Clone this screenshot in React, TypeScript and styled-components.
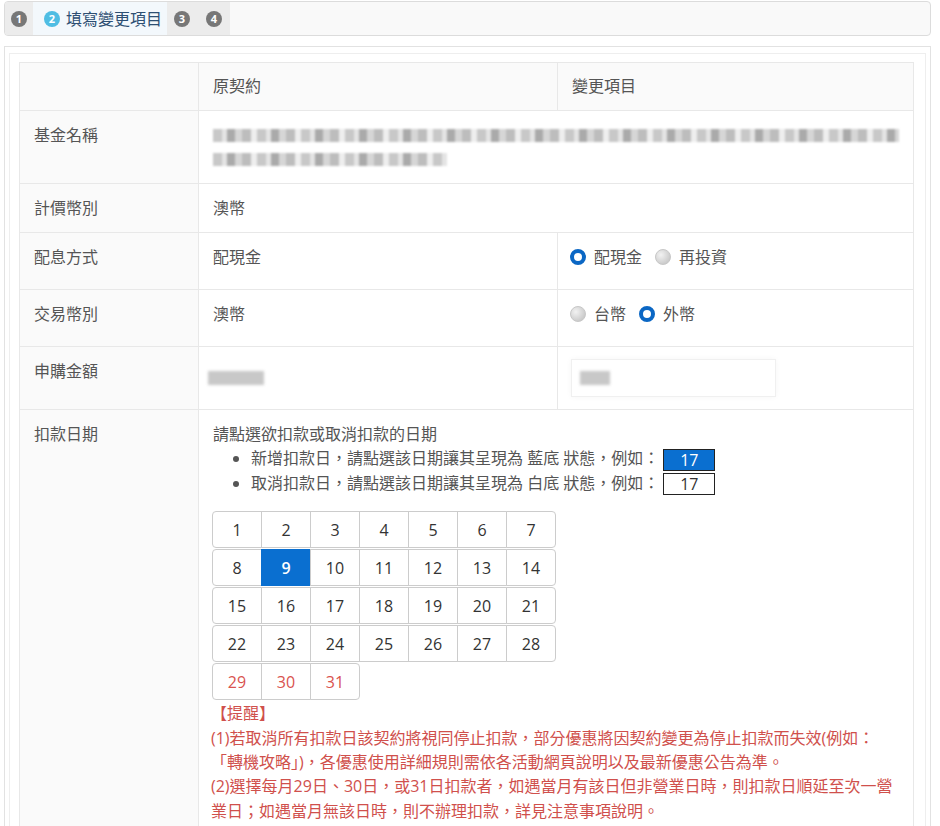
import React from "react";
import styled, { createGlobalStyle, css } from "styled-components";

const GlobalStyle = createGlobalStyle`
  html, body {
    margin: 0;
    padding: 0;
    overflow: hidden;
    background: #fff;
  }
  body {
    font-family: "Open Sans", "Noto Sans CJK TC", sans-serif;
    font-size: 16px;
    color: #555;
  }
`;

const Page = styled.div`
  padding: 1px 9px 0 4px;
`;

const StepBar = styled.div`
  display: flex;
  height: 33px;
  border: 1px solid #dcdcdc;
  border-radius: 4px;
  background: #f9f9f9;
  overflow: hidden;
`;

const Step = styled.div<{ $active?: boolean; $pad?: string }>`
  display: flex;
  align-items: center;
  gap: 6px;
  padding: ${(p) => p.$pad || "0 6px"};
  background: ${(p) => (p.$active ? "#f3f8fc" : "#ececec")};
`;

const StepNum = styled.span<{ $active?: boolean }>`
  flex-shrink: 0;
  width: 16px;
  height: 16px;
  border-radius: 50%;
  background: ${(p) => (p.$active ? "#4fbde3" : "#777")};
  color: #fff;
  font-size: 11px;
  font-weight: 700;
  line-height: 16px;
  text-align: center;
`;

const StepTitle = styled.span`
  color: #2d4f73;
  font-size: 16px;
  line-height: 20px;
`;

const Panel = styled.div`
  margin-top: 10px;
  border: 1px solid #e2e2e2;
  border-bottom: none;
  padding: 6px 4px 0 4px;
`;

const PanelInner = styled.div`
  border: 1px solid #eee;
  border-bottom: none;
  padding: 8px 11px 0 9px;
`;

const Table = styled.table`
  width: 100%;
  border-collapse: collapse;
  border: 1px solid #e8e8e8;
  line-height: 24px;
  td, th {
    border: 1px solid #e8e8e8;
    text-align: left;
    vertical-align: top;
    font-weight: 400;
  }
`;

const HeadCell = styled.th`
  background: #fafafa;
  padding: 11px 14px 12px;
  color: #555;
`;

const LabelCell = styled.td`
  background: #fafafa;
  padding: 12px 14px;
  color: #555;
`;

const ValueCell = styled.td`
  padding: 12px 14px;
  color: #555;
`;

const Blur = styled.div<{ $w: number }>`
  width: ${(p) => p.$w}px;
  height: 24px;
  display: flex;
  align-items: center;
  &::before {
    content: "";
    display: block;
    width: 100%;
    height: 13px;
    background: repeating-linear-gradient(
      90deg,
      #c8c8c8 0 9px,
      #e4e4e4 9px 14px,
      #aaa 14px 22px,
      #d6d6d6 22px 29px,
      #bdbdbd 29px 38px,
      #eee 38px 44px
    );
    filter: blur(1.3px);
  }
`;

const AmountBox = styled.div`
  height: 38px;
  display: flex;
  align-items: center;
`;

const FakeInput = styled.div`
  width: 205px;
  height: 38px;
  box-sizing: border-box;
  border: 1px solid #f0f0f0;
  box-shadow: 0 0 6px rgba(0, 0, 0, 0.04);
  display: flex;
  align-items: center;
  padding-left: 8px;
  margin-left: -1px;
`;

const GrayBlock = styled.span<{ $w: number; $shift?: number }>`
  display: block;
  width: ${(p) => p.$w}px;
  height: 14px;
  background: #c8c8c8;
  filter: blur(1.5px);
  margin-left: ${(p) => p.$shift ?? 0}px;
`;

const RadioGroup = styled.div`
  display: flex;
  align-items: center;
  height: 24px;
  margin-bottom: 8px;
  margin-left: -2px;
`;

const RadioLabel = styled.label`
  display: flex;
  align-items: center;
  gap: 8px;
  margin-right: 13px;
  color: #555;
`;

const Radio = styled.span<{ $checked?: boolean }>`
  width: 16px;
  height: 16px;
  border-radius: 50%;
  box-sizing: border-box;
  ${(p) =>
    p.$checked
      ? css`
          border: 4px solid #0b67c4;
          background: #fff;
        `
      : css`
          border: 1px solid #c8c8c8;
          background: radial-gradient(circle at 35% 35%, #f2f2f2, #bdbdbd);
        `}
`;

const BulletList = styled.ul`
  margin: 0;
  padding-left: 38px;
  list-style: disc;
`;

const Sample = styled.span<{ $blue?: boolean }>`
  display: inline-block;
  width: 52px;
  height: 22px;
  box-sizing: border-box;
  border: 1px solid #222;
  margin-left: 4px;
  text-align: center;
  line-height: 20px;
  vertical-align: middle;
  color: ${(p) => (p.$blue ? "#fff" : "#333")};
  background: ${(p) => (p.$blue ? "#0a6fd0" : "#fff")};
`;

const Calendar = styled.div`
  margin: 16px 0 0 -1px;
  width: 344px;
`;

const CalRow = styled.div`
  display: flex;
  margin-bottom: 1px;
`;

const Day = styled.button<{ $selected?: boolean; $red?: boolean }>`
  width: 50px;
  height: 37px;
  margin-left: -1px;
  border: 1px solid #ccc;
  background: #fff;
  font-family: "Open Sans", sans-serif;
  font-size: 16px;
  color: ${(p) => (p.$red ? "#d9534f" : "#333")};
  padding: 0;
  cursor: pointer;
  &:first-child {
    margin-left: 0;
    border-radius: 4px 0 0 4px;
  }
  &:last-child {
    border-radius: 0 4px 4px 0;
  }
  ${(p) =>
    p.$selected &&
    css`
      background: #0a6fd0;
      border-color: #0a6fd0;
      color: #fff;
      font-weight: 600;
    `}
`;

const Reminder = styled.div`
  color: #d0504c;
  margin-left: -2px;
  width: 685px;
  line-height: 24.3px;
`;

const rows = [
  [1, 2, 3, 4, 5, 6, 7],
  [8, 9, 10, 11, 12, 13, 14],
  [15, 16, 17, 18, 19, 20, 21],
  [22, 23, 24, 25, 26, 27, 28],
  [29, 30, 31],
];

export default function App() {
  return (
    <Page>
      <GlobalStyle />
      <StepBar>
        <Step>
          <StepNum>1</StepNum>
        </Step>
        <Step $active $pad="0 5px 0 11px">
          <StepNum $active>2</StepNum>
          <StepTitle>填寫變更項目</StepTitle>
        </Step>
        <Step $pad="0 8px 0 7px">
          <StepNum>3</StepNum>
        </Step>
        <Step $pad="0 8px">
          <StepNum>4</StepNum>
        </Step>
      </StepBar>

      <Panel>
        <PanelInner>
          <Table>
            <colgroup>
              <col style={{ width: 179 }} />
              <col style={{ width: 359 }} />
              <col />
            </colgroup>
            <thead>
              <tr>
                <HeadCell></HeadCell>
                <HeadCell>原契約</HeadCell>
                <HeadCell>變更項目</HeadCell>
              </tr>
            </thead>
            <tbody>
              <tr>
                <LabelCell>基金名稱</LabelCell>
                <ValueCell colSpan={2}>
                  <Blur $w={686} />
                  <Blur $w={234} />
                </ValueCell>
              </tr>
              <tr>
                <LabelCell>計價幣別</LabelCell>
                <ValueCell colSpan={2}>澳幣</ValueCell>
              </tr>
              <tr>
                <LabelCell>配息方式</LabelCell>
                <ValueCell>配現金</ValueCell>
                <ValueCell>
                  <RadioGroup>
                    <RadioLabel>
                      <Radio $checked />
                      配現金
                    </RadioLabel>
                    <RadioLabel>
                      <Radio />
                      再投資
                    </RadioLabel>
                  </RadioGroup>
                </ValueCell>
              </tr>
              <tr>
                <LabelCell>交易幣別</LabelCell>
                <ValueCell>澳幣</ValueCell>
                <ValueCell>
                  <RadioGroup>
                    <RadioLabel>
                      <Radio />
                      台幣
                    </RadioLabel>
                    <RadioLabel>
                      <Radio $checked />
                      外幣
                    </RadioLabel>
                  </RadioGroup>
                </ValueCell>
              </tr>
              <tr>
                <LabelCell>申購金額</LabelCell>
                <ValueCell>
                  <AmountBox>
                    <GrayBlock $w={56} $shift={-5} />
                  </AmountBox>
                </ValueCell>
                <ValueCell>
                  <FakeInput>
                    <GrayBlock $w={30} />
                  </FakeInput>
                </ValueCell>
              </tr>
              <tr>
                <LabelCell>扣款日期</LabelCell>
                <ValueCell colSpan={2}>
                  <div>請點選欲扣款或取消扣款的日期</div>
                  <BulletList>
                    <li>
                      新增扣款日，請點選該日期讓其呈現為 藍底 狀態，例如：
                      <Sample $blue>17</Sample>
                    </li>
                    <li>
                      取消扣款日，請點選該日期讓其呈現為 白底 狀態，例如：
                      <Sample>17</Sample>
                    </li>
                  </BulletList>
                  <Calendar>
                    {rows.map((r, i) => (
                      <CalRow key={i}>
                        {r.map((d) => (
                          <Day key={d} $selected={d === 9} $red={d >= 29}>
                            {d}
                          </Day>
                        ))}
                      </CalRow>
                    ))}
                  </Calendar>
                  <Reminder>
                    <div>【提醒】</div>
                    <div>
                      (1)若取消所有扣款日該契約將視同停止扣款，部分優惠將因契約變更為停止扣款而失效(例如：「轉機攻略」)，各優惠使用詳細規則需依各活動網頁說明以及最新優惠公告為準。
                    </div>
                    <div>
                      (2)選擇每月29日、30日，或31日扣款者，如遇當月有該日但非營業日時，則扣款日順延至次一營業日；如遇當月無該日時，則不辦理扣款，詳見注意事項說明。
                    </div>
                  </Reminder>
                </ValueCell>
              </tr>
            </tbody>
          </Table>
        </PanelInner>
      </Panel>
    </Page>
  );
}
